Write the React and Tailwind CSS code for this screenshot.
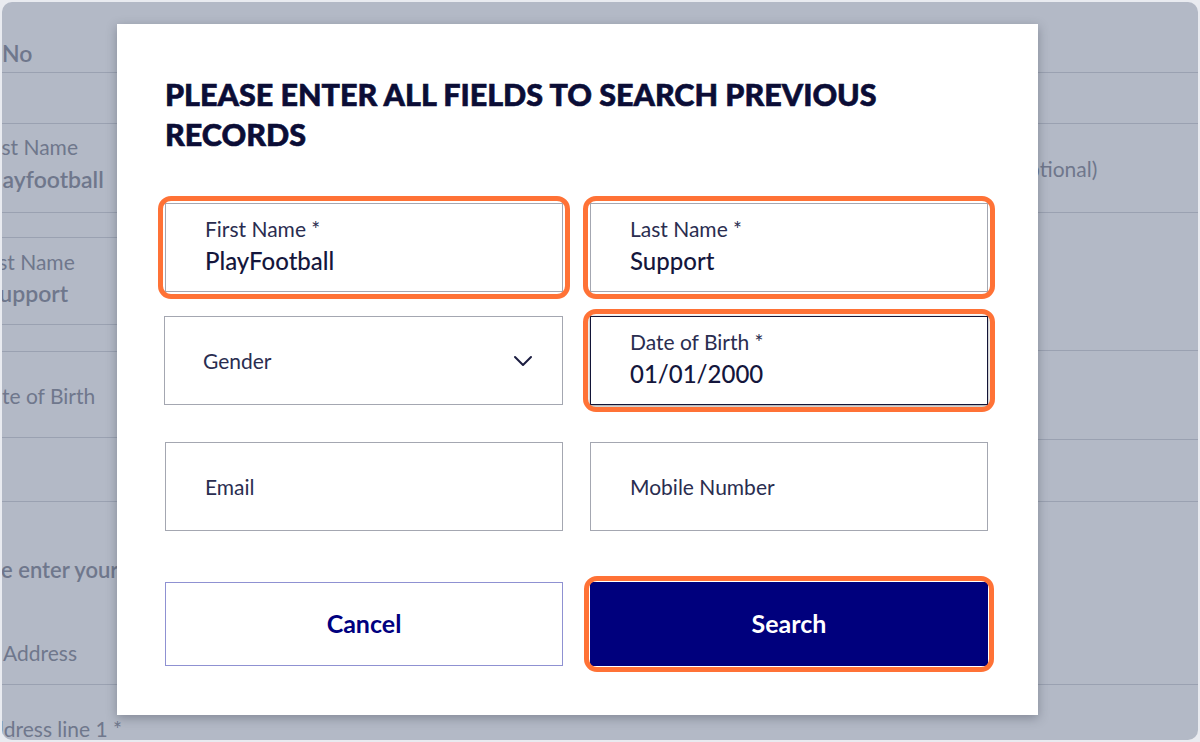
import React from 'react';

const Chevron = () => (
  <svg width="20" height="12" viewBox="0 0 20 12" fill="none">
    <path d="M2 2l8 8 8-8" stroke="#1b1d40" strokeWidth="2" strokeLinecap="round" strokeLinejoin="round" />
  </svg>
);

// orange highlight drawn around a focused control
const Ring = ({ inset = '-inset-[8px]' }) => (
  <span className={`pointer-events-none absolute ${inset} rounded-[13px] border-[5px] border-[#ff7236]`} />
);

const Field = ({ label, value, ring, focused }) => (
  <div
    className={`relative flex h-[89px] flex-col justify-center bg-white px-[39px] ${value ? 'pb-[4px]' : ''} ${
      focused ? 'border-[1.5px] border-[#121437] shadow-[0_1px_3px_rgba(0,0,0,0.45)]' : 'border border-[#a4a7b1]'
    }`}
  >
    {ring && <Ring />}
    <span className="text-[21px] leading-[26px] text-[#2a2d50]">{label}</span>
    {value && <span className="mt-[4px] text-[24px] leading-[30px] font-medium text-[#14163c]">{value}</span>}
  </div>
);

const BgRow = ({ h, children, className = '' }) => (
  <div className={`${h} border-b border-[#9aa1b1] ${className}`}>{children}</div>
);

export default function App() {
  return (
    <div className="h-[742px] w-[1200px] bg-[#e9ebf0] p-[2px]" style={{ fontFamily: 'Lato, "Open Sans", sans-serif' }}>
      <div className="relative h-full w-full overflow-hidden rounded-[10px] bg-[#b3b9c6] text-[#6f778c]">
        {/* dimmed page behind the dialog */}
        <div className="flex">
          <div className="w-[560px] shrink-0">
            <BgRow h="h-[71px]" className="flex items-end pb-[2px]">
              <span className="text-[23px] font-semibold">No</span>
            </BgRow>
            <BgRow h="h-[51px]" />
            <BgRow h="h-[89px]" className="flex flex-col pt-[10px]">
              <span className="-ml-[25px] text-[21px] leading-[26px]">First Name</span>
              <span className="-ml-[19px] mt-[4px] text-[23px] font-semibold leading-[30px]">Playfootball</span>
            </BgRow>
            <BgRow h="h-[25px]" />
            <BgRow h="h-[87px]" className="flex flex-col pt-[11px]">
              <span className="-ml-[25px] text-[21px] leading-[26px]">Last Name</span>
              <span className="-ml-[15px] mt-[3px] text-[23px] font-semibold leading-[30px]">Support</span>
            </BgRow>
            <BgRow h="h-[27px]" />
            <BgRow h="h-[86px]" className="flex items-center pt-[3px]">
              <span className="-ml-[26px] text-[21px]">Date of Birth</span>
            </BgRow>
            <BgRow h="h-[64px]" />
            <BgRow h="h-[183px]" className="flex flex-col pt-[54px]">
              <span className="-ml-[52px] text-[22px] font-semibold leading-[28px]">Please enter your address</span>
              <span className="ml-[1px] mt-[56px] text-[21px] leading-[26px]">Address</span>
            </BgRow>
            <div className="pt-[28px]">
              <span className="-ml-[24px] text-[21px]">Address line 1 *</span>
            </div>
          </div>
          <div className="flex-1">
            <BgRow h="h-[71px]" />
            <BgRow h="h-[51px]" />
            <BgRow h="h-[89px]" className="flex items-center pl-[320px]">
              <span className="mt-[2px] text-[21px]">Middle Name (optional)</span>
            </BgRow>
            <BgRow h="h-[138px]" />
            <BgRow h="h-[89px]" />
            <BgRow h="h-[62px]" />
            <BgRow h="h-[183px]" />
          </div>
        </div>

        {/* dialog */}
        <div className="absolute left-[115px] top-[22px] w-[921px] bg-white px-[48px] pb-[49px] pt-[50px] pr-[50px] shadow-[0_3px_10px_rgba(40,45,60,0.35)]">
          <h1 className="max-w-[790px] text-[30.5px] font-black uppercase leading-[40px] text-[#0b0d36] [-webkit-text-stroke:0.6px_#0b0d36]">
            Please enter all fields to search previous records
          </h1>

          <div className="mt-[49px] grid grid-cols-2 gap-x-[27px]">
            <Field label="First Name *" value="PlayFootball" ring />
            <Field label="Last Name *" value="Support" ring />

            <div className="mt-[24px] -ml-px flex h-[89px] items-center justify-between border border-[#a4a7b1] bg-white pl-[38px] pr-[29px]">
              <span className="text-[21px] text-[#2a2d50]">Gender</span>
              <Chevron />
            </div>
            <div className="mt-[24px]">
              <Field label="Date of Birth *" value="01/01/2000" ring focused />
            </div>

            <div className="mt-[37px]">
              <Field label="Email" />
            </div>
            <div className="mt-[37px]">
              <Field label="Mobile Number" />
            </div>

            <button className="mt-[51px] flex h-[84px] items-center justify-center border border-[#8f91d2] bg-white text-[25px] font-bold text-[#00007f]">
              Cancel
            </button>
            <button className="relative mt-[51px] flex h-[84px] items-center justify-center bg-[#00007d] text-[25px] font-bold text-white">
              <Ring inset="-inset-[6px]" />
              Search
            </button>
          </div>
        </div>
      </div>
    </div>
  );
}
